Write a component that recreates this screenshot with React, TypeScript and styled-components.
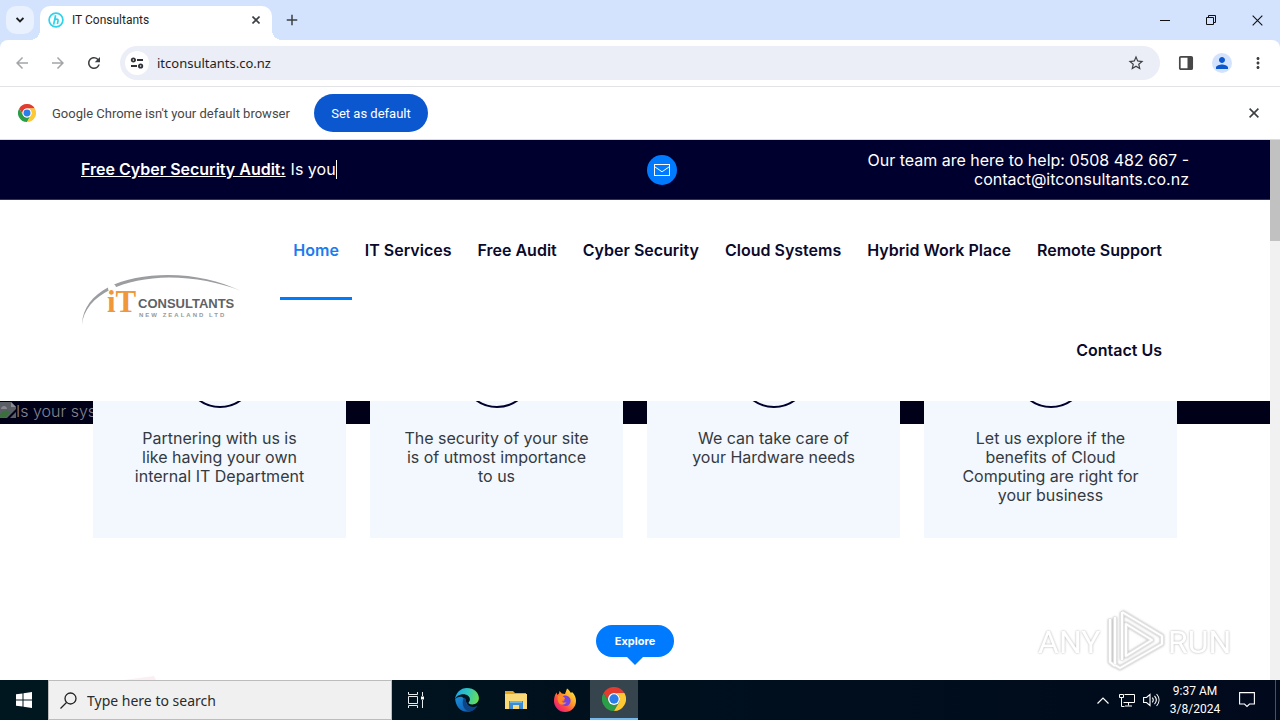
import React from "react";
import styled, { createGlobalStyle } from "styled-components";
import {
  MdAdd,
  MdArrowBack,
  MdArrowForward,
  MdMoreVert,
  MdPerson,
  MdRefresh,
  MdStarBorder,
} from "react-icons/md";

const uiFont = `"Noto Sans", "Open Sans", sans-serif`;
const compactFont = `Roboto, "Noto Sans", sans-serif`;
const siteFont = `Inter, "Liberation Sans", sans-serif`;

const GlobalStyle = createGlobalStyle`
  *, *::before, *::after { box-sizing: border-box; }
  body { margin: 0; background: #fff; font-family: ${uiFont}; }
  button { border: 0; padding: 0; background: none; font: inherit; color: inherit; }
  input { border: 0; padding: 0; background: none; font: inherit; min-width: 0; outline: 0; }
  a { color: inherit; text-decoration: none; }
  p, ul { margin: 0; padding: 0; }
  ul { list-style: none; }
  svg { display: block; flex: none; }
`;

const Desktop = styled.div`
  min-height: 100vh;
  display: flex;
  flex-direction: column;
`;

/* ---------- browser chrome ---------- */

const TabStrip = styled.div`
  height: 40px;
  display: flex;
  align-items: center;
  padding-left: 6px;
  background: #d3e3fd;
  color: #1f1f1f;
`;

const TabSearch = styled.button`
  width: 28px;
  height: 28px;
  display: grid;
  place-items: center;
  border-radius: 10px;
  background: #e9f0fe;
`;

const Tab = styled.div`
  position: relative;
  align-self: flex-end;
  width: 232px;
  height: 34px;
  margin-left: 6px;
  padding: 0 8px 6px;
  display: flex;
  align-items: center;
  gap: 8px;
  border-radius: 10px 10px 0 0;
  background: #fff;
  font-family: ${compactFont};
  font-size: 12px;

  &::before,
  &::after {
    content: "";
    position: absolute;
    bottom: 0;
    width: 10px;
    height: 10px;
  }
  &::before {
    left: -10px;
    background: radial-gradient(circle at 0 0, transparent 10px, #fff 10px);
  }
  &::after {
    right: -10px;
    background: radial-gradient(circle at 100% 0, transparent 10px, #fff 10px);
  }
`;

const TabTitle = styled.span`
  flex: 1;
`;

const PlainButton = styled.button<{ $size?: number; $color?: string }>`
  width: ${(p) => p.$size ?? 24}px;
  height: ${(p) => p.$size ?? 24}px;
  flex: none;
  display: grid;
  place-items: center;
  color: ${(p) => p.$color ?? "#3c4043"};
`;

const NewTab = styled(PlainButton)`
  margin-left: 8px;
`;

const WindowButtons = styled.div`
  margin-left: auto;
  display: flex;

  button {
    width: 46px;
    height: 40px;
  }
`;

const ToolbarWrap = styled.div`
  background: #d3e3fd;
`;

const Toolbar = styled.div`
  height: 47px;
  display: flex;
  align-items: center;
  padding: 0 10px;
  border-bottom: 1px solid #e2e3e6;
  border-radius: 8px 8px 0 0;
  background: #fff;
`;

const NavButtons = styled.div`
  display: flex;
  gap: 12px;
  margin-right: 14px;
`;

const Omnibox = styled.div`
  flex: 1;
  height: 34px;
  display: flex;
  align-items: center;
  gap: 8px;
  padding: 0 12px 0 5px;
  border-radius: 17px;
  background: #ebeef7;

  input {
    flex: 1;
    font-size: 13px;
    color: #1f1f1f;
  }
`;

const SiteInfo = styled.button`
  width: 24px;
  height: 24px;
  display: grid;
  place-items: center;
  border-radius: 50%;
  background: #fff;
`;

const ToolbarEnd = styled.div`
  display: flex;
  gap: 12px;
  margin-left: 14px;
`;

const Avatar = styled.button`
  width: 20px;
  height: 20px;
  margin: 2px;
  display: grid;
  place-items: center;
  border-radius: 50%;
  background: #d3e3fd;
  color: #0b57d0;
`;

const InfoBar = styled.div`
  height: 53px;
  display: flex;
  align-items: center;
  gap: 16px;
  padding: 0 14px 0 18px;
  border-bottom: 1px solid #dadce0;
  font-family: ${compactFont};
  font-size: 13px;
  color: #474747;

  > button:last-child {
    margin-left: auto;
  }
`;

const InfoText = styled.span`
  min-width: 246px;
`;

const DefaultButton = styled.button`
  min-width: 114px;
  height: 38px;
  padding: 0 16px;
  border-radius: 19px;
  background: #0b57d0;
  color: #fff;
`;

/* ---------- web page ---------- */

const Viewport = styled.div`
  flex: 1;
  display: flex;
`;

const Site = styled.main`
  position: relative;
  flex: 1;
  min-width: 0;
  display: flex;
  flex-direction: column;
  font-family: ${siteFont};
  font-size: 16px;
  line-height: 19px;
`;

const Scrollbar = styled.div`
  width: 10px;
  background: #f1f1f1;

  &::before {
    content: "";
    display: block;
    height: 101px;
    background: #c1c1c1;
  }
`;

const Container = styled.div`
  width: 100%;
  max-width: 1108px;
  margin: 0 auto;
`;

const TopBar = styled.div`
  background: #00002e;
  border-bottom: 1px solid #33334f;
  color: #fff;
`;

const TopBarRow = styled(Container)`
  height: 59px;
  display: grid;
  grid-template-columns: 1fr 1fr;
  column-gap: 24px;
  align-items: center;
`;

const Audit = styled.p`
  display: flex;
  gap: 5px;

  a {
    font-weight: 600;
    text-decoration: underline;
  }
`;

const Typed = styled.span`
  border-right: 1px solid #fff;
`;

const Contact = styled.div`
  display: flex;
  align-items: center;
  justify-content: space-between;
  text-align: right;
`;

const MailLink = styled.a`
  width: 30px;
  height: 30px;
  display: grid;
  place-items: center;
  border-radius: 50%;
  background: #007bff;
`;

const Header = styled.header`
  background: #fff;
  padding-bottom: 1px;
`;

const HeaderRow = styled(Container)`
  display: flex;
  align-items: center;
  justify-content: space-between;
`;

const Menu = styled.ul`
  flex: 1;
  display: flex;
  flex-wrap: wrap;
  justify-content: flex-end;
  padding-right: 14px;
  margin-left: 24px;
`;

const MenuLink = styled.a<{ $active?: boolean }>`
  display: block;
  padding: 0 13px;
  line-height: 100px;
  font-weight: 600;
  white-space: nowrap;
  box-shadow: ${(p) => (p.$active ? "inset 0 -3px #007bff" : "none")};
  color: ${(p) => (p.$active ? "#1a7cf0" : "#0a0a2a")};
`;

const Hero = styled.section`
  display: grid;
`;

const HeroBand = styled.div`
  grid-area: 1 / 1;
  height: 23px;
  padding-top: 1px;
  display: flex;
  align-items: flex-start;
  background: #000018;
  color: #85858d;
  font-weight: 300;
`;

const Cards = styled(Container)`
  grid-area: 1 / 1;
  display: grid;
  grid-template-columns: repeat(4, 1fr);
  gap: 24px;
  padding: 0 12px;
`;

const CardBox = styled.article`
  height: 137px;
  padding: 0 32px;
  overflow: hidden;
  background: #f3f7fe;
  color: #343a40;
  text-align: center;
`;

const CardRing = styled.div`
  width: 72px;
  height: 72px;
  margin: -65px auto 21px;
  border: 2px solid #00002e;
  border-radius: 50%;
`;

const Explore = styled.button`
  align-self: center;
  margin-top: auto;
  margin-bottom: 15px;
  display: flex;
  flex-direction: column;
  align-items: center;
  font-size: 11px;
  font-weight: 700;
  line-height: 32px;
  color: #fff;

  span {
    padding: 0 19px;
    border-radius: 16px;
    background: #007bff;
  }
  &::after {
    content: "";
    border: 8px solid transparent;
    border-top-color: #007bff;
    border-bottom: 0;
  }
`;

const Watermark = styled.svg`
  position: absolute;
  right: 32px;
  bottom: 6px;
  filter: drop-shadow(0 0 1px rgba(0, 0, 0, 0.3));
`;

const PageDecor = styled.svg`
  position: absolute;
  left: 98px;
  bottom: 0;
`;

/* ---------- taskbar ---------- */

const Taskbar = styled.footer`
  height: 40px;
  display: flex;
  background: linear-gradient(90deg, #00171f, #000a1c);
  color: #fff;
`;

const TaskButton = styled.button<{ $active?: boolean; $width?: number }>`
  width: ${(p) => p.$width ?? 48}px;
  display: grid;
  place-items: center;
  background: ${(p) => (p.$active ? "#36454d" : "transparent")};
  border-bottom: ${(p) => (p.$active ? "2px solid #76b9ed" : "0")};
`;

const SearchBox = styled.label`
  width: 344px;
  display: flex;
  align-items: center;
  gap: 10px;
  padding: 0 11px;
  border: 1px solid #bcbcbc;
  background: #f0f0f0;

  input {
    flex: 1;
    font-size: 14px;
  }
  input::placeholder {
    color: #2b2b2b;
    opacity: 1;
  }
`;

const Apps = styled.div`
  display: flex;
  gap: 1px;
  margin-left: 3px;
`;

const Tray = styled.div`
  margin-left: auto;
  display: flex;

  &::after {
    content: "";
    width: 5px;
    margin-left: 8px;
    border-left: 1px solid #4b5361;
  }
`;

const Clock = styled.time`
  width: 64px;
  display: flex;
  flex-direction: column;
  justify-content: center;
  text-align: center;
  font-family: ${compactFont};
  font-size: 12px;
  line-height: 18px;
`;

/* ---------- drawings ---------- */

const CrossIcon = ({ size = 9, weight = 1.6 }: { size?: number; weight?: number }) => (
  <svg width={size} height={size} viewBox="0 0 10 10" stroke="currentColor" strokeWidth={weight} aria-hidden="true">
    <path d="m.6.6 8.800 8.800M9.400.600.6 9.400" />
  </svg>
);

const ChevronDown = () => (
  <svg width="8" height="6" viewBox="0 0 8 6" fill="none" stroke="currentColor" strokeWidth="1.8" aria-hidden="true">
    <path d="m.6 1 3.400 3.400L7.400 1" />
  </svg>
);

const ChromeIcon = ({ size }: { size: number }) => (
  <svg width={size} height={size} viewBox="0 0 48 48" aria-hidden="true">
    <path fill="#e33b2e" d="M3.2 12A24 24 0 0 1 44.8 12H24A12 12 0 0 0 13.6 30Z" />
    <path fill="#2a9d47" d="M3.2 12A24 24 0 0 0 24 48L34.4 30A12 12 0 0 1 13.6 30Z" />
    <path fill="#fcc934" d="M44.8 12A24 24 0 0 1 24 48L34.4 30A12 12 0 0 0 24 12Z" />
    <circle cx="24" cy="24" r="12" fill="#fff" />
    <circle cx="24" cy="24" r="9.3" fill="#2b7de9" />
  </svg>
);

const Favicon = () => (
  <svg width="16" height="16" viewBox="0 0 16 16" fill="none" stroke="#2fd3ea" aria-hidden="true">
    <circle cx="8" cy="8" r="6.9" strokeWidth="1.7" />
    <path d="M7.6 3.2 5.6 12.6M6.4 8.6c1.4-2 4-2 3.6.2l-.6 3.4" strokeWidth="1.7" />
  </svg>
);

const TuneIcon = () => (
  <svg width="14" height="14" viewBox="0 0 14 14" fill="none" stroke="#303236" strokeWidth="1.8" aria-hidden="true">
    <circle cx="3.4" cy="4" r="1.7" />
    <path d="M7 4h6M1 10h6" />
    <circle cx="10.6" cy="10" r="1.7" />
  </svg>
);

const SidePanelIcon = () => (
  <svg width="16" height="16" viewBox="0 0 16 16" aria-hidden="true">
    <rect x="1.8" y="1.8" width="12.4" height="12.4" rx="1" fill="none" stroke="#474747" strokeWidth="1.7" />
    <path d="M9.5 2h4.7v12H9.5z" fill="#474747" />
  </svg>
);

const MailIcon = () => (
  <svg width="16" height="12" viewBox="0 0 16 12" fill="none" stroke="#fff" aria-hidden="true">
    <rect x=".5" y=".5" width="15" height="11" />
    <path d="m.8 2.8 7.2 5 7.2-5" />
  </svg>
);

const CompanyLogo = () => (
  <svg width="160" height="52" viewBox="0 0 160 52" role="img" aria-label="IT Consultants New Zealand Ltd">
    <path d="M1 51C2 17 42 1 87 1c27 0 52 6 73 16C138 8 114 4 88 3.5 44 4 4 20 1 51Z" fill="#9b9da0" />
    <circle cx="31" cy="14" r="4" fill="#fff" />
    <text x="26" y="38" fill="#f0973a" fontFamily="Liberation Serif, serif" fontWeight="700" fontSize="31">
      iT
    </text>
    <text x="57" y="34" fill="#606266" fontFamily="Liberation Sans, sans-serif" fontWeight="700" fontSize="13">
      CONSULTANTS
    </text>
    <text x="58" y="43" fill="#96989b" fontFamily="Liberation Sans, sans-serif" fontWeight="700" fontSize="6" letterSpacing="2">
      NEW ZEALAND LTD
    </text>
  </svg>
);

const BrokenImage = () => (
  <svg width="16" height="16" viewBox="0 0 16 16" aria-hidden="true">
    <path d="M0 0h11l5 5v11H0z" fill="#5c5e66" />
    <path d="M1 7c0-4 6-4 6 0z" fill="#85888f" />
    <path d="M0 15v-2c2-5 6-5 11-4l-5 6z" fill="#39703c" />
    <path d="M16 7 7 16h3l6-6z" fill="#000018" />
    <path d="M11 0v5h5z" fill="#8b8d93" />
  </svg>
);

const WindowsIcon = () => (
  <svg width="16" height="16" viewBox="0 0 16 16" fill="#fff" aria-hidden="true">
    <path d="M0 2.3 6.5 1.4V7.5H0zM7.5 1.2 16 0v7.5H7.5zM0 8.5h6.5v6.1L0 13.7zM7.5 8.5H16V16l-8.5-1.2z" />
  </svg>
);

const SearchIcon = () => (
  <svg width="17" height="17" viewBox="0 0 17 17" fill="none" stroke="#222" strokeWidth="1.3" aria-hidden="true">
    <circle cx="10.5" cy="6.5" r="5.5" />
    <path d="M6.5 10.5.5 16.5" />
  </svg>
);

const TaskViewIcon = () => (
  <svg width="18" height="16" viewBox="0 0 18 16" fill="none" stroke="#e8ebed" aria-hidden="true">
    <path d="M1.5 0v2.5h9V0M1.5 16v-2.5h9V16M1.5 4.5h9v7h-9zM15.5 0v4M15.5 8v8" />
    <path d="M14 4.5h3v3h-3z" fill="#fff" stroke="none" />
  </svg>
);

const EdgeIcon = () => (
  <svg width="24" height="24" viewBox="0 0 24 24" aria-hidden="true">
    <defs>
      <linearGradient id="edgeTop" x1="0" y1="0.3" x2="1" y2="0.5">
        <stop offset="0" stopColor="#1ca6e6" />
        <stop offset=".5" stopColor="#30c5c0" />
        <stop offset="1" stopColor="#68dd55" />
      </linearGradient>
      <linearGradient id="edgeLow" x1="0" y1="0" x2="1" y2="1">
        <stop offset="0" stopColor="#1a8fdc" />
        <stop offset="1" stopColor="#0f4fa5" />
      </linearGradient>
    </defs>
    <path fill="url(#edgeLow)" d="M.2 11C.6 17.8 5 23.8 12 23.8c4.6 0 8-2.3 10-5.6-4.3 2.2-9.4.4-10.6-3.8C10 10 6 6 .2 11Z" />
    <path fill="#0c4486" d="M9.2 9.5C6.5 12.5 7 22 14.5 23.6c3-.6 6-2.8 7.5-5.4-6 2.3-12.5-1-10.8-6.7Z" />
    <path fill="url(#edgeTop)" d="M.1 11.5C.5 5 5.5.1 12 .1c7 0 11.9 4.7 11.9 10 0 4-3 6.4-6.6 6.4-2.8 0-4-1.2-3.7-2 .6-.9 1.3-1.5 1.3-3C14.9 8.5 12 6.3 8.4 6.3 4 6.3.8 8.8.1 11.5Z" />
  </svg>
);

const FolderIcon = () => (
  <svg width="22" height="18" viewBox="0 0 22 18" aria-hidden="true">
    <path fill="#e5a520" d="M0 0h8l2 2h11v4H0z" />
    <path fill="#fbd975" d="M0 3h22v15H0z" />
    <path fill="#3c8bd0" d="M4 10h14v8h-4v-4H8v4H4z" />
    <path fill="#6bb5e8" d="M5 10h12v2H5z" />
  </svg>
);

const FirefoxIcon = () => (
  <svg width="24" height="24" viewBox="0 0 24 24" aria-hidden="true">
    <defs>
      <linearGradient id="fox" x1="0.9" y1="0.1" x2="0.15" y2="0.9">
        <stop offset="0" stopColor="#ffe63b" />
        <stop offset=".4" stopColor="#ff9a2a" />
        <stop offset=".7" stopColor="#ff4a45" />
        <stop offset="1" stopColor="#e81f7a" />
      </linearGradient>
    </defs>
    <path fill="url(#fox)" d="M3.6 4.5 4.3 7 6 5.6 6.5 3l2.3 2.6L12 6l2-5.5c2 1 3 3.5 4 4.5l1-1c2.5 2 4 5.5 4 8.8A11 11 0 0 1 12 24 11 11 0 0 1 1 13c0-3.5 1-6.5 2.6-8.5Z" />
    <path fill="#7542e5" d="M12 7.5c3 0 5.6 2.2 5.6 5.2S15.2 18 12.3 18 7 16 6.8 13.3c1.5 1.2 4 .7 4.8-.8L8.5 11c.3-2 1.5-3.5 3.5-3.5Z" />
    <path fill="#ff8a28" d="M5 8c1.8-1 4-.6 5.2.6L12 10l-.5 1.5-3 1.5c1 1.8 3.5 2 5 .9-1 3-6 4-8 .6C4.4 12.5 4.5 9.5 5 8Z" />
  </svg>
);

const ChevronUp = () => (
  <svg width="12" height="7" viewBox="0 0 12 7" fill="none" stroke="#fff" strokeWidth="1.2" aria-hidden="true">
    <path d="m.5 6.5 5.5-5.5 5.5 5.5" />
  </svg>
);

const NetworkIcon = () => (
  <svg width="16" height="14" viewBox="0 0 16 14" fill="none" stroke="#fff" aria-hidden="true">
    <path d="M5.5 1.5h10v8h-11M9.5 9.5v3M6 13h7M.5 1.5h4v3h-4zM2.5 4.5v9h3" />
  </svg>
);

const VolumeIcon = () => (
  <svg width="17" height="14" viewBox="0 0 17 14" fill="none" stroke="#fff" strokeWidth="1.1" aria-hidden="true">
    <path d="M.6 4.5h2.9L7 1.5v11l-3.5-3H.6zM9.3 4.6c1.2 1.5 1.2 3.3 0 4.8M11.5 2.8c2.2 2.5 2.2 5.9 0 8.4M13.6 1c3.2 3.6 3.2 8.4 0 12" />
  </svg>
);

const NoticeIcon = () => (
  <svg width="16" height="16" viewBox="0 0 16 16" fill="none" stroke="#fff" strokeWidth="1.1" aria-hidden="true">
    <path d="M.6.6h14.8v11.4H10.5L8 14.5 5.5 12H.6z" />
  </svg>
);

const menu = [
  "Home",
  "IT Services",
  "Free Audit",
  "Cyber Security",
  "Cloud Systems",
  "Hybrid Work Place",
  "Remote Support",
  "Contact Us",
];

const cards = [
  "Partnering with us is like\u00a0having your own internal IT\u00a0Department",
  "The security of your site is of utmost importance to us",
  "We can take care of your Hardware needs",
  "Let us explore if the benefits of Cloud Computing are right for your business",
];

const BrowserChrome = () => (
  <>
    <TabStrip>
      <TabSearch aria-label="Search tabs">
        <ChevronDown />
      </TabSearch>
      <Tab>
        <Favicon />
        <TabTitle>IT Consultants</TabTitle>
        <PlainButton $size={16} aria-label="Close tab">
          <CrossIcon size={8} weight={2} />
        </PlainButton>
      </Tab>
      <NewTab aria-label="New tab">
        <MdAdd size={18} />
      </NewTab>
      <WindowButtons>
        <PlainButton $color="#111" aria-label="Minimize">
          <svg width="10" height="10" viewBox="0 0 10 10" stroke="currentColor">
            <path d="M0 5.5h10" />
          </svg>
        </PlainButton>
        <PlainButton $color="#111" aria-label="Restore">
          <svg width="10" height="10" viewBox="0 0 10 10" fill="none" stroke="currentColor">
            <path d="M.5 2.5h7v7h-7zM2.5 2.5v-2h7v7h-2" />
          </svg>
        </PlainButton>
        <PlainButton $color="#111" aria-label="Close">
          <CrossIcon size={11} weight={1} />
        </PlainButton>
      </WindowButtons>
    </TabStrip>
    <ToolbarWrap>
      <Toolbar>
        <NavButtons>
          <PlainButton $color="#a3a5a8" aria-label="Back">
            <MdArrowBack size={18} />
          </PlainButton>
          <PlainButton $color="#a3a5a8" aria-label="Forward">
            <MdArrowForward size={18} />
          </PlainButton>
          <PlainButton aria-label="Reload">
            <MdRefresh size={18} />
          </PlainButton>
        </NavButtons>
        <Omnibox>
          <SiteInfo aria-label="View site information">
            <TuneIcon />
          </SiteInfo>
          <input aria-label="Address" defaultValue="itconsultants.co.nz" />
          <PlainButton aria-label="Bookmark this tab">
            <MdStarBorder size={18} />
          </PlainButton>
        </Omnibox>
        <ToolbarEnd>
          <PlainButton aria-label="Side panel">
            <SidePanelIcon />
          </PlainButton>
          <Avatar aria-label="Profile">
            <MdPerson size={18} />
          </Avatar>
          <PlainButton aria-label="Menu">
            <MdMoreVert size={18} />
          </PlainButton>
        </ToolbarEnd>
      </Toolbar>
    </ToolbarWrap>
    <InfoBar>
      <ChromeIcon size={18} />
      <InfoText>Google Chrome isn't your default browser</InfoText>
      <DefaultButton>Set as default</DefaultButton>
      <PlainButton aria-label="Dismiss">
        <CrossIcon size={10} />
      </PlainButton>
    </InfoBar>
  </>
);

const WebPage = () => (
  <Site>
    <TopBar>
      <TopBarRow>
        <Audit>
          <a href="#audit">Free Cyber Security Audit:</a>
          <Typed>Is you</Typed>
        </Audit>
        <Contact>
          <MailLink href="#mail" aria-label="Email us">
            <MailIcon />
          </MailLink>
          <p>
            Our team are here to help: 0508 482 667 -
            <br />
            contact@itconsultants.co.nz
          </p>
        </Contact>
      </TopBarRow>
    </TopBar>
    <Header>
      <HeaderRow>
        <a href="#home">
          <CompanyLogo />
        </a>
        <Menu>
          {menu.map((item, i) => (
            <li key={item}>
              <MenuLink href="#menu" $active={i === 0}>
                {item}
              </MenuLink>
            </li>
          ))}
        </Menu>
      </HeaderRow>
    </Header>
    <Hero>
      <HeroBand>
        <BrokenImage />
        <span>Is your syst</span>
      </HeroBand>
      <Cards>
        {cards.map((text) => (
          <CardBox key={text}>
            <CardRing />
            <p>{text}</p>
          </CardBox>
        ))}
      </Cards>
    </Hero>
    <Explore>
      <span>Explore</span>
    </Explore>
    <PageDecor width="58" height="4" viewBox="0 0 58 4" aria-hidden="true">
      <path d="M26 4 56 0l2 4z" fill="#fbeff1" />
    </PageDecor>
    <Watermark width="202" height="68" viewBox="0 0 202 68" fill="#fff" aria-label="ANY RUN">
      <text x="2" y="47" fontFamily="Roboto, sans-serif" fontWeight="400" fontSize="32">
        ANY
      </text>
      <g fill="none" strokeLinejoin="round">
        <path d="M86 6v48M86 6l40 24v8L84 62l-5-3M90 18v32l26-16zM74 13v43l5 4M79 11v47" stroke="#e2e2e2" strokeWidth="4" />
        <path d="M86 6v48M86 6l40 24v8L84 62l-5-3M90 18v32l26-16zM74 13v43l5 4M79 11v47" stroke="#fff" strokeWidth="2" />
      </g>
      <text x="132" y="47" fontFamily="Roboto, sans-serif" fontWeight="400" fontSize="32">
        RUN
      </text>
    </Watermark>
  </Site>
);

export default function App() {
  return (
    <Desktop>
      <GlobalStyle />
      <BrowserChrome />
      <Viewport>
        <WebPage />
        <Scrollbar />
      </Viewport>
      <Taskbar>
        <TaskButton aria-label="Start">
          <WindowsIcon />
        </TaskButton>
        <SearchBox>
          <SearchIcon />
          <input aria-label="Search" placeholder="Type here to search" />
        </SearchBox>
        <TaskButton aria-label="Task view">
          <TaskViewIcon />
        </TaskButton>
        <Apps>
          <TaskButton aria-label="Edge">
            <EdgeIcon />
          </TaskButton>
          <TaskButton aria-label="File Explorer">
            <FolderIcon />
          </TaskButton>
          <TaskButton aria-label="Firefox">
            <FirefoxIcon />
          </TaskButton>
          <TaskButton $active aria-label="Chrome">
            <ChromeIcon size={24} />
          </TaskButton>
        </Apps>
        <Tray>
          <TaskButton $width={24} aria-label="Show hidden icons">
            <ChevronUp />
          </TaskButton>
          <TaskButton $width={24} aria-label="Network">
            <NetworkIcon />
          </TaskButton>
          <TaskButton $width={24} aria-label="Volume">
            <VolumeIcon />
          </TaskButton>
          <Clock>
            <span>9:37 AM</span>
            <span>3/8/2024</span>
          </Clock>
          <TaskButton $width={40} aria-label="Notifications">
            <NoticeIcon />
          </TaskButton>
        </Tray>
      </Taskbar>
    </Desktop>
  );
}
